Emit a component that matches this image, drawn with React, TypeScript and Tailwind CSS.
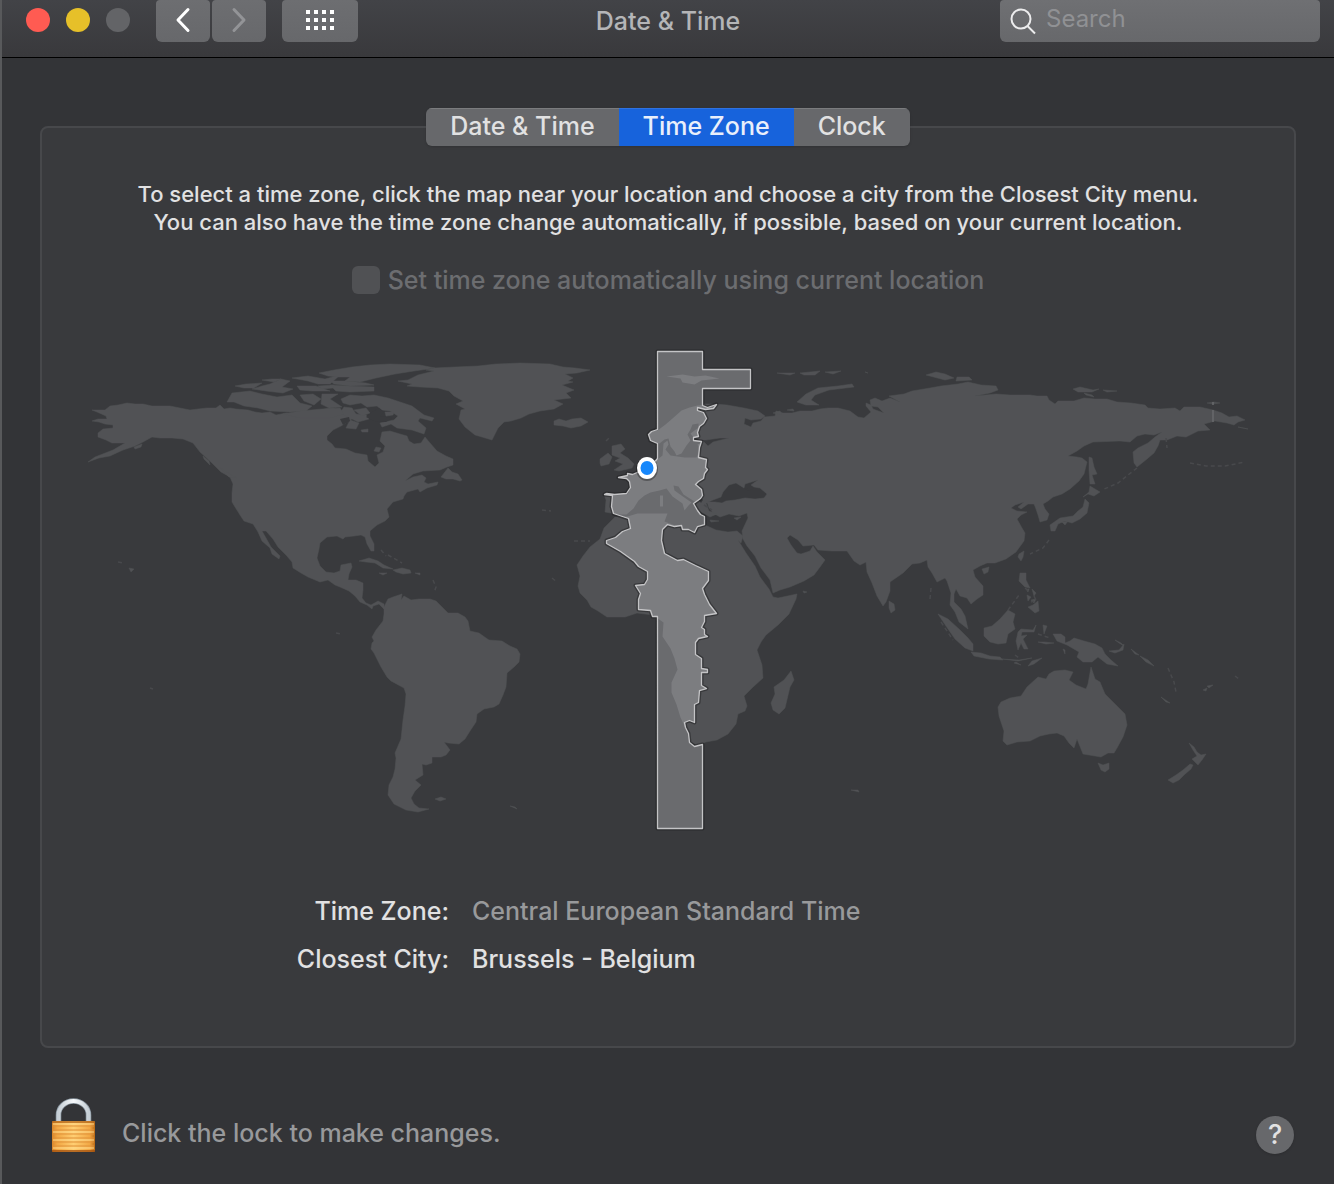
import React, { useState } from 'react';
import { clsx } from 'clsx';

const TABS = ['Date & Time', 'Time Zone', 'Clock'];

// Closed outlines of the land masses, in map units
const LAND = [
  // north america
  '97,412 92,410 105,410 110,406 118,405 127,403 135,404 143,404 152,406 170,406 180,408 190,410 198,409 207,408 216,408 220,405 224,409 230,408 236,409 248,410 255,412 262,413 270,412 276,415 286,413 295,414 304,414 312,413 318,411 325,409 333,408 340,411 350,412 356,416 349,421 341,426 333,430 327,436 327,440 332,444 335,448 346,449 355,453 367,455 368,461 375,467 379,463 377,455 383,452 385,446 380,441 382,432 390,431 400,434 407,436 409,441 414,444 421,443 425,437 430,443 437,451 446,456 453,459 453,465 447,467 440,470 423,471 413,474 405,481 413,477 422,475 426,478 424,482 428,484 438,482 437,485 427,488 420,492 418,489 407,492 404,496 403,499 393,502 387,509 389,517 385,521 377,525 370,531 370,536 374,544 374,551 371,551 367,544 365,537 361,535 354,536 345,537 343,539 337,536 327,537 320,543 319,549 317,558 320,566 326,572 334,573 340,571 341,565 351,563 352,567 349,574 348,580 356,580 363,583 363,590 362,598 366,603 371,605 378,601 384,604 384,609 379,604 373,606 372,609 367,605 360,602 355,596 349,591 340,587 335,585 328,580 320,582 308,577 301,573 293,568 292,562 286,555 278,547 273,539 266,531 262,531 266,538 271,547 280,556 279,559 272,554 270,548 262,541 258,532 253,524 244,521 240,515 235,507 232,502 232,493 233,484 230,477 221,472 212,463 200,452 193,443 183,439 172,438 160,438 152,437 143,442 135,446 123,450 110,456 99,458 88,462 95,457 113,450 125,443 112,443 106,440 98,437 98,433 103,429 113,428 113,425 105,424 99,422 92,421 98,419 107,419 106,416',
  // baffin and labrador coast
  '341,399 350,395 362,396 374,395 388,398 400,402 412,406 424,415 434,418 432,421 420,418 418,421 426,428 424,434 412,430 397,428 391,424 382,427 380,423 394,420 398,416 390,411 382,410 377,406 367,407 361,403 350,405 343,403',
  // canadian arctic
  '227,402 232,393 250,391 262,394 277,397 292,395 300,403 312,406 306,411 290,412 270,411 258,408 244,406 234,402',
  '235,386 246,384 262,383 254,388 244,388', '252,389 262,386 270,384 281,379 290,381 282,387 293,389 283,393 266,391',
  '292,378 308,376 325,379 340,375 330,384 318,384 308,381', '297,386 316,386 330,391 312,391 300,390',
  '300,395 313,394 321,399 314,405 304,401', '319,373 334,370 352,367 370,365 390,364 420,365 435,368 414,371 395,374 376,378 360,382 345,381 350,377 338,377 328,376',
  '330,385 348,386 374,387 374,391 350,392 336,391', '322,394 338,394 330,399 342,407 329,408 321,404', '350,420 359,423 356,429 346,428',
  '385,412 394,412 393,415 386,416', '376,447 381,448 379,452 374,451',
  '262,380 272,379 281,379 274,382', '318,386 334,385 333,388 322,389', '344,407 352,408 356,414 366,415 369,419 358,422 350,418 340,413', '354,410 366,408 370,413 362,416', '330,381 346,381 366,383 374,385 350,386 334,384', '361,430 368,429 368,432 362,432', '283,414 300,411 322,409 340,408 344,414 330,418 300,418',
  // pacific coast islands
  '134,447 142,444 141,447 135,449', '203,456 209,461 210,465 204,459', '219,467 230,474 237,478 229,477',
  // greenland
  '398,381 408,380 418,375 434,371 426,370 434,368 455,367 478,366 496,364 520,363 550,364 563,367 575,368 590,370 577,373 565,374 573,378 568,381 573,382 562,385 574,390 566,393 571,398 554,400 563,404 554,409 540,411 529,414 521,418 511,421 504,422 498,428 494,436 492,440 482,437 475,435 465,427 459,419 461,410 465,409 456,404 463,401 454,396 449,391 438,388 420,387 407,386 412,384',
  // iceland
  '554,421 559,419 566,421 572,419 581,418 588,422 581,426 571,428 563,426 554,425',
  // newfoundland
  '441,477 448,468 452,472 458,474 462,480 460,481 453,479 446,479',
  // caribbean
  '359,561 369,558 378,561 384,565 393,569 383,568 375,563 366,562', '393,570 402,568 410,570 411,573 403,574 396,572', '379,573 387,573 383,575', '415,573 420,573 420,575',
  // south america
  '384,607 388,599 393,597 402,594 401,600 404,596 411,600 419,599 430,599 436,601 442,607 448,613 458,613 465,617 468,621 470,631 479,633 486,638 489,640 502,641 510,646 517,649 520,654 519,662 514,667 507,673 506,687 503,695 499,704 494,707 484,709 477,714 476,722 470,731 465,739 459,744 448,743 444,742 450,750 446,755 441,757 432,757 432,763 426,765 422,764 423,775 415,780 421,785 415,791 411,798 414,804 419,808 429,809 418,812 406,810 394,804 388,795 389,785 393,777 395,769 396,758 395,753 401,739 403,720 405,706 406,694 404,688 391,681 387,677 381,667 374,653 371,649 372,643 374,641 372,637 376,630 383,621 384,614',
  '435,799 441,797 446,799 440,801', '510,806 515,807 517,809',
  // eurasia
  '604,494 614,495 627,494 630,487 628,480 624,478 618,477 628,475 633,474 637,471 643,469 648,465 657,459 662,455 663,443 667,440 668,444 665,449 670,455 677,456 684,457 696,457 699,450 697,444 703,441 708,446 713,442 729,438 720,438 706,440 700,440 693,437 690,433 698,427 698,423 692,424 690,429 687,434 690,440 686,445 681,453 676,455 674,451 670,446 668,438 664,439 659,443 652,442 648,436 650,431 657,430 665,424 672,418 681,410 689,407 697,405 707,404 715,404 727,405 744,408 758,411 765,416 761,419 751,420 745,418 744,424 751,427 753,423 761,421 764,417 775,416 776,411 783,413 792,413 800,411 812,411 820,409 828,408 838,408 850,411 858,417 864,418 871,412 866,406 866,403 871,405 873,409 884,413 878,407 871,406 870,400 875,398 882,401 890,398 900,402 889,396 904,394 912,391 930,388 941,386 958,384 968,382 981,385 996,386 998,390 990,393 975,396 996,394 1010,395 1030,395 1037,396 1047,396 1049,400 1055,404 1058,401 1074,401 1084,398 1095,399 1107,399 1117,402 1131,403 1145,405 1148,408 1160,409 1175,408 1180,411 1184,407 1200,407 1213,410 1222,413 1229,417 1237,416 1245,420 1238,422 1234,425 1227,423 1215,421 1204,424 1210,430 1198,431 1186,437 1177,436 1167,440 1160,440 1158,446 1154,453 1147,459 1137,467 1134,463 1133,452 1138,448 1148,443 1155,437 1162,432 1154,435 1145,434 1137,436 1130,442 1120,441 1093,442 1084,446 1077,451 1068,456 1077,457 1082,458 1087,462 1084,474 1079,481 1070,489 1062,494 1053,497 1048,501 1043,504 1045,509 1049,514 1047,520 1040,522 1038,515 1036,509 1034,504 1028,504 1021,509 1018,507 1024,502 1015,505 1011,508 1017,511 1027,512 1021,515 1017,519 1022,528 1025,533 1024,541 1016,552 1006,559 995,563 987,563 980,566 973,570 975,577 983,586 983,595 977,599 971,604 967,598 960,596 956,589 954,594 954,602 961,609 965,616 968,629 959,622 955,612 950,605 951,593 947,581 945,578 937,582 932,573 928,567 927,560 920,563 912,564 903,573 890,582 890,591 886,602 883,606 877,596 872,583 867,572 866,562 860,565 854,561 847,551 832,551 818,550 814,545 803,546 798,540 790,535 787,538 791,545 797,553 801,554 810,551 813,546 817,552 825,560 820,567 814,575 804,581 790,587 780,590 773,593 770,580 761,568 755,556 747,546 743,539 742,531 748,518 747,513 739,516 729,514 720,517 713,513 709,508 707,502 715,502 722,503 726,501 735,500 745,498 755,499 764,498 767,494 760,488 754,487 751,485 758,480 745,484 744,488 736,483 729,485 723,492 721,497 713,500 706,503 709,511 717,514 710,517 703,513 698,510 694,501 683,494 678,486 673,485 674,490 681,495 691,502 688,505 684,510 682,503 672,496 666,488 659,490 650,492 644,495 638,500 633,508 626,514 616,514 605,512 606,500',
  // africa and madagascar
  '615,517 627,516 637,513 652,513 667,513 664,521 672,524 680,527 688,530 697,532 698,526 705,525 716,530 728,532 737,531 743,536 741,543 738,540 746,553 755,566 760,577 769,589 773,597 778,598 797,594 796,599 789,614 778,625 766,635 761,642 757,650 762,665 763,678 752,688 744,696 747,706 745,711 738,714 736,724 728,734 717,740 706,742 697,745 690,742 688,734 680,717 676,704 671,692 671,682 677,669 674,658 670,648 662,636 663,622 653,615 637,613 625,617 607,617 598,611 591,607 587,600 580,593 578,586 580,576 577,565 583,556 590,547 600,539 604,528',
  '791,671 794,680 790,687 785,708 779,714 773,710 771,703 775,694 774,687 784,680',
  // great britain and ireland
  '612,446 621,444 625,449 620,453 628,458 634,464 632,468 619,471 614,470 623,464 615,461 620,458 612,455', '600,459 608,453 612,457 609,464 601,466 600,463',
  // crete and cyprus
  '710,520 719,521 711,522', '734,518 741,517 737,520',
  // svalbard and russian arctic
  '666,376 682,374 694,376 705,375 719,378 701,380 694,384 682,382 680,378', '797,402 806,394 818,388 838,386 852,384 854,387 829,390 815,395 811,400 819,405 806,405', '926,375 936,372 945,374 954,378 945,380', '957,377 969,377 972,380 956,381',
  '777,373 795,373 790,375', '800,373 820,371 815,375 804,375', '825,372 841,371 833,374', '1073,389 1080,387 1093,390 1099,389 1092,392 1078,392', '1084,393 1092,395 1094,397 1086,395', '1103,390 1117,391 1107,392', '1207,403 1214,402 1220,403 1213,404', '1238,427 1248,429',
  '787,410 793,409 794,411', '773,413 780,411 782,415', '865,372 868,373',
  // sakhalin, japan, taiwan
  '1089,457 1092,458 1094,467 1097,474 1092,475 1095,484 1090,484 1089,470', '1090,486 1100,492 1094,496 1088,494 1083,497 1089,492', '1085,499 1089,503 1087,513 1080,519 1072,523 1065,521 1058,524 1055,531 1051,531 1050,525 1060,518 1073,516 1078,511 1083,507', '1062,522 1068,521 1065,525', '1019,554 1024,551 1023,557 1021,561 1018,557',
  // philippines
  '1020,573 1026,573 1026,580 1030,588 1025,587 1019,581', '1026,589 1029,589 1028,592', '1032,589 1036,593 1034,596', '1027,595 1031,597 1028,601', '1031,600 1036,599 1034,603', '1033,605 1038,601 1039,611 1035,613 1028,607',
  // indonesia
  '938,614 948,619 960,630 968,638 973,644 973,651 965,648 955,639 946,626', '971,652 981,653 990,656 1000,657 1003,660 989,659 974,656', '984,628 992,626 1000,619 1008,610 1015,614 1013,622 1015,629 1008,634 1006,643 998,644 990,642 984,636', '1018,632 1021,629 1033,630 1036,625 1034,632 1022,632 1021,636 1027,635 1023,639 1028,649 1024,649 1021,643 1018,650 1016,641', '1002,659 1019,660 1032,658 1018,661', '1028,666 1032,661 1042,658 1034,664', '1016,662 1021,665 1014,663',
  '1043,625 1047,626 1044,634', '1038,642 1044,642 1054,643 1046,644', '1063,649 1065,650 1065,654',
  // new guinea
  '1053,634 1061,634 1065,637 1065,643 1070,641 1074,638 1084,641 1095,644 1102,648 1105,654 1111,660 1118,666 1107,664 1098,657 1092,662 1083,662 1077,657 1079,652 1067,645 1057,641', '1109,651 1119,650 1124,644 1123,650 1115,653', '1115,640 1121,643 1124,646 1119,643', '1131,649 1139,655 1135,654', '1140,656 1148,660 1154,666 1146,662',
  // australia and tasmania
  '1091,667 1095,679 1100,682 1105,694 1116,705 1125,714 1127,725 1123,737 1117,748 1114,753 1108,753 1101,757 1089,755 1083,754 1079,744 1077,739 1074,748 1069,743 1064,736 1057,733 1049,734 1040,736 1030,741 1017,742 1007,745 1003,741 1004,731 999,716 998,707 1001,702 1010,698 1021,696 1027,687 1038,677 1046,679 1049,674 1054,671 1065,670 1073,672 1069,680 1076,685 1086,689 1088,684',
  '1098,763 1103,765 1109,763 1109,769 1105,772 1101,770',
  // new zealand
  '1189,743 1194,747 1197,752 1201,755 1206,754 1202,760 1198,765 1196,763 1192,759 1197,756 1193,750', '1190,764 1193,765 1191,769 1184,775 1179,780 1173,783 1168,780 1176,775 1183,770',
  // scattered islands
  '889,601 894,604 895,610 891,613 889,608', '982,569 989,567 988,572 984,574', '1161,697 1170,703 1166,702', '1203,690 1207,688 1206,691', '1207,686 1213,685 1209,688', '129,568 134,569 131,572', '851,790 858,790 859,792', '803,591 807,592 804,593',
];

const CAVITIES = ['697,498 700,497 703,500 701,503', '745,489 748,488 754,488 749,491', '372,412 379,408 384,412 380,416 392,418 386,422 374,421 366,417', '340,419 349,417 350,421 343,425'];

// Faint island chains, drawn as broken strokes
const CHAINS = [
  '1137,468 1128,475 1118,483 1102,490', '1049,540 1043,548 1030,554', '1008,610 1014,602 1019,595', '1166,438 1167,448',
  '1190,463 1206,466 1225,466 1245,462', '118,562 123,563', '381,550 386,556', '931,588 930,599', '433,580 436,587 434,593', '542,510 551,511',
  '941,622 953,640', '1168,668 1174,682 1176,692', '1034,596 1036,600 1031,602', '1025,588 1030,592', '1235,676 1239,679', '606,441 609,438', '574,541 590,541', '552,578 557,582',
  '1038,634 1050,638', '1015,655 1019,658', '388,555 402,563', '704,505 712,510', '336,633 341,634', '150,688 153,689',
];

const ZONE =
  '657,351 702,351 702,369 750,369 750,388 702,388 702,405 707,407 716,404 713,408 705,409 697,407 697,410 703,412 706,418 703,423 699,426 697,432 698,436 693,437 693,440 701,441 699,447 698,457 706,459 705,467 707,469 704,473 703,478 698,481 695,484 701,489 702,495 700,498 693,503 697,510 700,514 704,516 704,524 697,526 694,532 688,529 682,529 681,525 674,526 667,524 662,529 661,540 664,553 677,560 683,559 695,565 708,571 708,580 702,588 704,594 709,604 716,613 704,615 704,621 701,627 704,629 704,634 707,636 698,638 695,642 695,654 701,658 701,668 707,669 707,672 701,672 701,685 706,688 699,690 698,702 694,704 694,722 689,720 684,722 685,727 688,733 689,742 694,746 702,744 702,828 657,828 657,616 652,616 650,610 638,609 638,599 640,593 635,585 644,584 647,579 647,571 638,566 634,561 620,551 606,543 606,540 615,537 622,531 630,528 628,518 613,513 611,506 612,495 604,494 606,493 614,494 626,493 630,487 629,481 626,478 618,477 627,475 627,473 632,474 639,471 652,464 657,458 657,443 650,440 648,434 651,431 657,429';

function WorldMap() {
  return (
    <svg viewBox="80 344 1176 492" className="block w-full" role="img" aria-label="World map">
      <g fill="#515255" stroke="#515255" strokeWidth="0.5" strokeLinejoin="round">
        {LAND.map((points) => (
          <polygon key={points} points={points} />
        ))}
      </g>
      <g fill="none" stroke="#48494c" strokeWidth="1.5" strokeDasharray="4 3">
        {CHAINS.map((points) => (
          <polyline key={points} points={points} />
        ))}
      </g>
      <path d="M661.500 495v11" stroke="#515255" strokeWidth="3" />
      <path d="M1213 402v3M1213 410v12" stroke="#68696c" strokeWidth="1.500" />
      <g fill="#393a3d">
        {CAVITIES.map((points) => (
          <polygon key={points} points={points} />
        ))}
      </g>
      <g transform="translate(0.5 0.5)" strokeLinejoin="round">
        <polygon points={ZONE} fill="none" stroke="#1d1d1f" strokeOpacity="0.5" strokeWidth="4" />
        <polygon points={ZONE} fill="#6a6b6e" />
        <clipPath id="zone">
          <polygon points={ZONE} />
        </clipPath>
        <g clipPath="url(#zone)" fill="#7c7d80">
          {LAND.map((points) => (
            <polygon key={points} points={points} />
          ))}
          <path d="M661 495v11" stroke="#7c7d80" strokeWidth="3" />
        </g>
        <polygon points={ZONE} fill="none" stroke="#c4c4c6" strokeWidth="1.300" />
      </g>
      <ellipse cx="647" cy="469" rx="11" ry="12" fill="#000" opacity="0.3" />
      <ellipse cx="647" cy="468" rx="10" ry="11" fill="#fff" />
      <ellipse cx="647" cy="468" rx="6.500" ry="7" fill="#1787fb" />
    </svg>
  );
}

function LockIcon() {
  return (
    <svg viewBox="0 0 44 55" className="h-[55px] w-11">
      <defs>
        <linearGradient id="brass" x1="0" x2="1">
          <stop offset="0" stopColor="#d9862a" />
          <stop offset="0.12" stopColor="#f2a743" />
          <stop offset="0.5" stopColor="#ffce72" />
          <stop offset="0.88" stopColor="#f2a743" />
          <stop offset="1" stopColor="#b96a16" />
        </linearGradient>
        <linearGradient id="steel" x1="0" x2="1">
          <stop offset="0" stopColor="#c6cfd6" />
          <stop offset="0.5" stopColor="#f6f9fb" />
          <stop offset="1" stopColor="#c6cfd6" />
        </linearGradient>
      </defs>
      <path d="M6.500 25V17a15 14 0 0 1 30 0V25" fill="none" stroke="#8f9ba5" strokeWidth="5.500" />
      <path d="M6.500 25V17a15 14 0 0 1 30 0V25" fill="none" stroke="url(#steel)" strokeWidth="4" />
      <rect x="0" y="23" width="43" height="31" rx="1.500" fill="url(#brass)" />
      <path d="M0 24h43" stroke="#b5691c" strokeWidth="1.500" />
      <path d="M1 28h41M1 32h41M1 36h41M1 40h41M1 44h41M1 48h41" stroke="#e0923a" strokeWidth="1.200" />
      <path d="M1 26h41M1 34h41M1 42h41M1 50h41" stroke="#ffdc8e" strokeWidth="1" />
      <path d="M0 53h43" stroke="#a04e0c" strokeWidth="1.500" />
    </svg>
  );
}

function Toolbar() {
  const button = 'flex h-[42px] items-center justify-center rounded-b-md rounded-t-sm bg-linear-to-b from-[#6d6e71] to-[#67686b] pb-0.5';

  return (
    <header className="grid h-[58px] grid-cols-[1fr_auto_1fr] items-start border-b border-black bg-linear-to-b from-[#424347] to-[#39393c]">
      <div className="flex items-start pl-6">
        <div className="flex gap-4 pt-2">
          <button aria-label="Close" className="size-6 rounded-full bg-[#ff5b52]" />
          <button aria-label="Minimize" className="size-6 rounded-full bg-[#e6c029]" />
          <button aria-label="Zoom" disabled className="size-6 rounded-full bg-[#636467]" />
        </div>
        <div className="ml-[26px] flex gap-0.5">
          <button aria-label="Back" className={clsx(button, 'w-[54px]')}>
            <svg width="16" height="26" viewBox="0 0 16 26" fill="none" stroke="#fff" strokeWidth="3" strokeLinecap="round" strokeLinejoin="round">
              <path d="M13 2.500 3 13l10 10.500" />
            </svg>
          </button>
          <button aria-label="Forward" disabled className={clsx(button, 'w-[54px]')}>
            <svg width="16" height="26" viewBox="0 0 16 26" fill="none" stroke="#939497" strokeWidth="3" strokeLinecap="round" strokeLinejoin="round">
              <path d="m3 2.500 10 10.500L3 23.500" />
            </svg>
          </button>
        </div>
        <button aria-label="Show All" className={clsx(button, 'ml-4 w-[76px]')}>
          <svg width="28" height="20" viewBox="0 0 28 20" fill="#fff">
            {[0, 8, 16].map((y) =>
              [0, 8, 16, 24].map((x) => <rect key={`${x}-${y}`} x={x} y={y} width="4" height="4" />)
            )}
          </svg>
        </button>
      </div>

      <h1 className="pt-[5px] text-[25px] leading-8 font-medium text-[#b4b5b7]">Date &amp; Time</h1>

      <div className="flex justify-end pr-3.5">
        <label className="flex h-[42px] w-80 items-center gap-2 rounded-b-md rounded-t-sm bg-linear-to-b from-[#6f7073] to-[#67686b] pl-2.5">
          <svg width="28" height="28" viewBox="0 0 28 28" fill="none" stroke="#ececed" strokeWidth="2" className="shrink-0">
            <circle cx="11" cy="12" r="9.500" />
            <path d="m17.500 19 7.500 7.500" />
          </svg>
          <input
            type="search"
            aria-label="Search"
            placeholder="Search"
            className="w-full min-w-0 bg-transparent pb-1 text-2xl outline-none placeholder:text-[#909194]"
          />
        </label>
      </div>
    </header>
  );
}

export default function App() {
  const [tab, setTab] = useState('Time Zone');

  return (
    <div className="flex min-h-screen flex-col border-l-2 border-[#58595b] bg-[#333437] font-['Inter','Liberation_Sans',sans-serif] text-[#e1e1e2]">
      <Toolbar />

      <main className="flex flex-1 flex-col px-[38px] pt-[50px] font-medium">
        <div role="tablist" className="relative z-10 -mb-5 flex h-[38px] self-center overflow-hidden rounded-md bg-[#67686b] shadow-sm">
          {TABS.map((name) => (
            <button
              key={name}
              role="tab"
              aria-selected={tab === name}
              onClick={() => setTab(name)}
              className={clsx(
                'border-t px-6 pb-0.5 text-[25px] leading-[35px]',
                tab === name ? 'border-[#2f72e0] bg-[#1763dc] text-[#e9effb]' : 'border-[#7b7c7e]'
              )}
            >
              {name}
            </button>
          ))}
        </div>

        <section className="rounded-lg border-2 border-[#47484b] bg-[#393a3d] px-[38px] pt-[52px] pb-[71px]">
          <p className="text-center text-[22px] leading-7">
            To select a time zone, click the map near your location and choose a city from the Closest City menu.
            <br />
            You can also have the time zone change automatically, if possible, based on your current location.
          </p>

          <label className="mt-7 flex items-center justify-center gap-2 text-[25px] leading-8 text-[#6c6d70]">
            <input type="checkbox" disabled className="size-7 appearance-none rounded-md bg-[#505154]" />
            Set time zone automatically using current location
          </label>

          <div className="mt-12">
            <WorldMap />
          </div>

          <div className="mt-[59px] grid grid-cols-[369px_1fr] gap-x-[23px] gap-y-4 text-[25px] leading-8">
            <span className="text-right">Time Zone:</span>
            <span className="text-[#98999b]">Central European Standard Time</span>
            <label htmlFor="city" className="text-right">
              Closest City:
            </label>
            <input id="city" defaultValue="Brussels - Belgium" className="min-w-0 bg-transparent outline-none" />
          </div>
        </section>

        <footer className="mt-12 flex items-center pb-7 pl-3">
          <button aria-label="Unlock">
            <LockIcon />
          </button>
          <span className="ml-[26px] pt-4 text-[25px] leading-8 text-[#98999b]">Click the lock to make changes.</span>
          <button aria-label="Help" className="mt-5 mr-0.5 ml-auto size-[38px] rounded-full bg-[#67686b] text-[27px] leading-8 shadow">
            ?
          </button>
        </footer>
      </main>
    </div>
  );
}
